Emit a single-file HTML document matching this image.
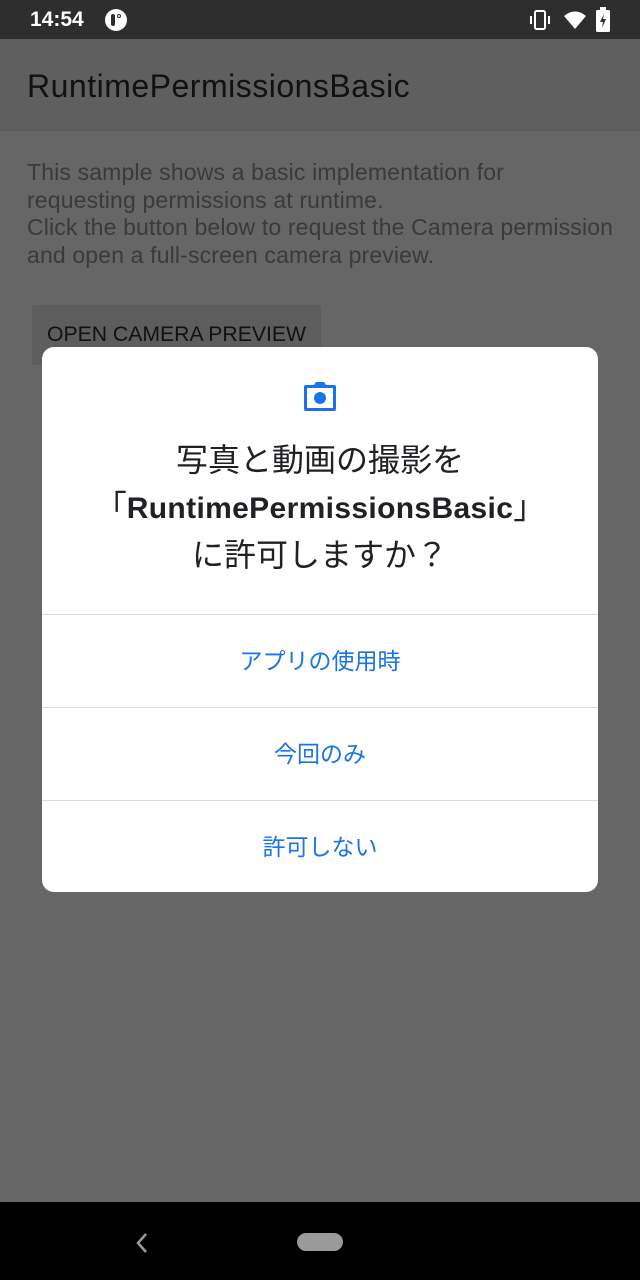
<!DOCTYPE html>
<html><head><meta charset="utf-8"><style>
*{margin:0;padding:0;box-sizing:border-box}
body{width:640px;height:1280px;background:#666;font-family:"Liberation Sans","Noto Sans CJK JP",sans-serif;position:relative;overflow:hidden}
.status{position:absolute;top:0;left:0;width:640px;height:39px;background:#2e2e2e;color:#fff}
.tb{position:absolute;top:39px;left:0;width:640px;height:92px;background:#5f5f5f;border-bottom:1px solid #595959}
.tb span{position:absolute;left:27px;top:29px;font-size:32px;letter-spacing:0.5px;color:#111}
.desc{position:absolute;left:27px;top:159px;font-size:23px;letter-spacing:0.15px;line-height:27.5px;color:#3a3a3a;white-space:nowrap}
.btn{position:absolute;left:32px;top:305px;width:289px;height:60px;background:#5d5d5d;border-radius:3px}
.btn span{position:absolute;left:15px;top:18px;font-size:21.2px;color:#111}
.dlg{position:absolute;left:42px;top:347px;width:556px;height:545px;background:#fff;border-radius:12px}
.title{position:absolute;top:437px;left:42px;width:556px;text-align:center;font-size:32px;line-height:47px;color:#202124;white-space:nowrap}
.title b{font-size:30px;font-weight:bold;letter-spacing:0.35px}
.opt{position:absolute;left:42px;width:556px;height:93px;border-top:1px solid #dadada;text-align:center;line-height:93px;font-size:23px;color:#1a73e8}
.nav{position:absolute;top:1202px;left:0;width:640px;height:78px;background:#000}
</style></head><body>
<div class="status">
<div style="position:absolute;left:30px;top:8px;font-size:21px;font-weight:bold">14:54</div>
<div style="position:absolute;left:105px;top:9px;width:22px;height:22px;border-radius:50%;background:#fff"><div style="position:absolute;left:6px;top:5px;width:4px;height:12px;background:#2e2e2e;border-radius:2px"></div><div style="position:absolute;left:12px;top:5px;width:4px;height:4px;border:1.5px solid #2e2e2e;border-radius:50%"></div></div>
<svg style="position:absolute;left:528px;top:9px" width="24" height="22" viewBox="0 0 24 22"><rect x="7" y="2" width="10" height="18" rx="1.5" fill="none" stroke="#fff" stroke-width="2"/><rect x="2" y="7" width="2" height="8" fill="#fff"/><rect x="20" y="7" width="2" height="8" fill="#fff"/></svg>
<svg style="position:absolute;left:563px;top:10px" width="24" height="20" viewBox="0 0 24 20"><path d="M1 6 Q12 -3 23 6 L12 19 Z" fill="#fff"/></svg>
<svg style="position:absolute;left:595px;top:7px" width="16" height="26" viewBox="0 0 16 26"><rect x="5" y="0" width="6" height="3" fill="#fff"/><rect x="1" y="3" width="14" height="22" rx="1.5" fill="#fff"/><path d="M9 7 L5 15 H8 L7 21 L11 12 H8 Z" fill="#2e2e2e"/></svg>
</div>
<div class="tb"><span>RuntimePermissionsBasic</span></div>
<div class="desc">This sample shows a basic implementation for<br>requesting permissions at runtime.<br>Click the button below to request the Camera permission<br>and open a full-screen camera preview.</div>
<div class="btn"><span>OPEN CAMERA PREVIEW</span></div>
<div class="dlg"></div>
<svg style="position:absolute;left:303px;top:380px" width="34" height="32" viewBox="0 0 34 32"><path d="M11 5 L13 2 H21 L23 5 H31 Q33 5 33 7 V29 Q33 31 31 31 H3 Q1 31 1 29 V7 Q1 5 3 5 Z" fill="#1a73e8"/><rect x="4" y="8" width="26" height="20" fill="#fff"/><circle cx="17" cy="18" r="6" fill="#1a73e8"/></svg>
<div class="title">写真と動画の撮影を<br>「<b>RuntimePermissionsBasic</b>」<br>に許可しますか？</div>
<div class="opt" style="top:614px">アプリの使用時</div>
<div class="opt" style="top:707px">今回のみ</div>
<div class="opt" style="top:800px">許可しない</div>
<div class="nav">
<svg style="position:absolute;left:134px;top:30px" width="16" height="22" viewBox="0 0 16 22"><path d="M12 2 L4 11 L12 20" fill="none" stroke="#9a9a9a" stroke-width="2.5"/></svg>
<div style="position:absolute;left:297px;top:31px;width:46px;height:18px;border-radius:9px;background:#9a9a9a"></div>
</div>
</body></html>
